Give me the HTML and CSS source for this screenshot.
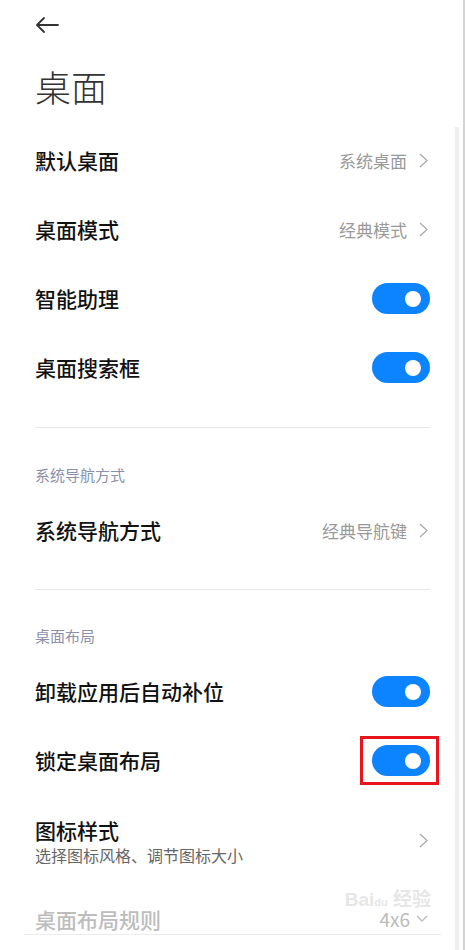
FILE: index.html
```html
<!DOCTYPE html>
<html lang="zh-CN">
<head>
    <meta charset="UTF-8">
    <meta name="viewport" content="width=device-width, initial-scale=1.0">
    <title>桌面</title>
    <link rel="stylesheet" href="styles.css">
</head>
<body>
    <div class="phone">
        <div class="content">
            <div class="topbar">
                <svg class="back" width="24" height="16" viewBox="0 0 24 16">
                    <path d="M23 8H2M9 1L2 8l7 7" fill="none" stroke="#333" stroke-width="1.8" stroke-linecap="round" stroke-linejoin="round"/>
                </svg>
            </div>
            <h1 class="title">桌面</h1>

            <div class="row">
                <span class="label">默认桌面</span>
                <span class="value">系统桌面 <svg class="chev" width="9" height="15" viewBox="0 0 9 15"><path d="M1 1l7 6.5L1 14" fill="none" stroke="#aaa" stroke-width="1.3"/></svg></span>
            </div>
            <div class="row">
                <span class="label">桌面模式</span>
                <span class="value">经典模式 <svg class="chev" width="9" height="15" viewBox="0 0 9 15"><path d="M1 1l7 6.5L1 14" fill="none" stroke="#aaa" stroke-width="1.3"/></svg></span>
            </div>
            <div class="row">
                <span class="label">智能助理</span>
                <span class="toggle"><span class="knob"></span></span>
            </div>
            <div class="row">
                <span class="label">桌面搜索框</span>
                <span class="toggle"><span class="knob"></span></span>
            </div>

            <div class="divider"></div>
            <div class="section">系统导航方式</div>
            <div class="row">
                <span class="label">系统导航方式</span>
                <span class="value">经典导航键 <svg class="chev" width="9" height="15" viewBox="0 0 9 15"><path d="M1 1l7 6.5L1 14" fill="none" stroke="#aaa" stroke-width="1.3"/></svg></span>
            </div>

            <div class="divider second"></div>
            <div class="section">桌面布局</div>
            <div class="row">
                <span class="label">卸载应用后自动补位</span>
                <span class="toggle"><span class="knob"></span></span>
            </div>
            <div class="row">
                <span class="label">锁定桌面布局</span>
                <span class="toggle marked"><span class="knob"></span></span>
            </div>
            <div class="row tall">
                <div class="text">
                    <div class="label">图标样式</div>
                    <div class="sub">选择图标风格、调节图标大小</div>
                </div>
                <svg class="chev" width="9" height="15" viewBox="0 0 9 15"><path d="M1 1l7 6.5L1 14" fill="none" stroke="#aaa" stroke-width="1.3"/></svg>
            </div>
            <div class="row faded">
                <span class="label">桌面布局规则</span>
                <span class="value">4x6 <svg class="down" width="12" height="8" viewBox="0 0 12 8"><path d="M1 1l5 5 5-5" fill="none" stroke="#bbb" stroke-width="1.3"/></svg></span>
                <span class="watermark">Bai<small>du</small> 经验</span>
            </div>
        </div>
        <div class="scrollbar"></div>
    </div>
</body>
</html>
```

FILE: styles.css
```css
body {
    margin: 0;
    background-color: #fff;
    font-family: "Noto Sans CJK SC", "Noto Sans", sans-serif;
    color: #111;
}
.phone {
    display: flex;
    height: 950px;
    overflow: hidden;
    border-right: 2px solid #d4d4d4;
}
.content {
    flex: 1;
    padding: 0 25px 0 35px;
}
.scrollbar {
    width: 4px;
    margin: 127px 4px 0 0;
    background-color: #efefef;
}
.topbar {
    height: 50px;
    display: flex;
    align-items: center;
}
.back {
    display: block;
}
.title {
    margin: 11px 0 15px;
    font-size: 36px;
    font-weight: 300;
    line-height: 50px;
    color: #333;
}
.row {
    position: relative;
    height: 69px;
    display: flex;
    align-items: center;
    justify-content: space-between;
}
.label {
    font-size: 21px;
    font-weight: 500;
    line-height: 28px;
    margin-top: -2px;
}
.value {
    display: flex;
    align-items: center;
    gap: 12px;
    font-size: 17px;
    color: #999;
}
.chev {
    display: block;
    margin-right: 2px;
}
.toggle {
    position: relative;
    width: 58px;
    height: 31px;
    border-radius: 16px;
    background-color: #0d84ff;
}
.knob {
    position: absolute;
    right: 9px;
    top: 7.5px;
    width: 16px;
    height: 16px;
    border-radius: 50%;
    background-color: #fff;
}
.marked::after {
    content: "";
    position: absolute;
    left: -12px;
    top: -9px;
    right: -9px;
    bottom: -9px;
    border: 3px solid #e8141e;
}
.divider {
    height: 1px;
    margin-top: 25px;
    background-color: #e6e6e6;
}
.divider.second {
    margin-top: 24px;
}
.section {
    padding-top: 37px;
    margin-bottom: 11px;
    font-size: 15px;
    line-height: 20px;
    color: #8c90a8;
}
.divider.second + .section {
    padding-top: 36px;
    margin-bottom: 11px;
}
.row.tall {
    height: 91px;
}
.tall .label {
    margin-top: 0;
}
.sub {
    font-size: 16px;
    line-height: 22px;
    color: #666;
}
.row.faded {
    height: 49px;
    align-items: flex-end;
    padding-bottom: 1px;
    margin: 0 -11px;
    padding-left: 11px;
    padding-right: 11px;
    border-bottom: 1px solid #ececec;
    box-sizing: border-box;
}
.faded .label {
    color: #bdbdbd;
}
.faded .value {
    color: #bbb;
    font-size: 19px;
    gap: 6px;
    line-height: 28px;
}
.down {
    display: block;
    margin-right: 2px;
}
.watermark {
    position: absolute;
    right: 10px;
    bottom: 22px;
    font-size: 19px;
    font-weight: 700;
    line-height: 20px;
    color: rgba(205, 205, 205, 0.5);
    font-family: "Liberation Sans", "Noto Sans CJK SC", sans-serif;
}
.watermark small {
    font-size: 11px;
}
```
